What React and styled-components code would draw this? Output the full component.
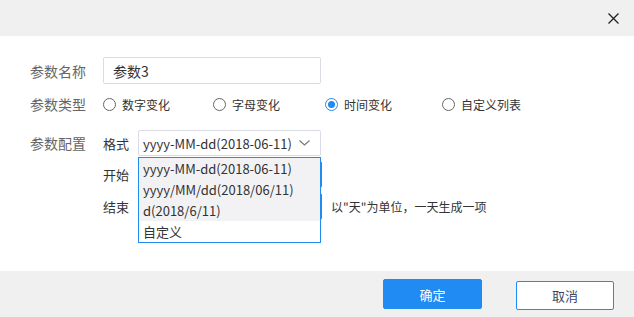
import React from 'react';
import styled, { createGlobalStyle } from 'styled-components';

const GlobalStyle = createGlobalStyle`
  html, body {
    margin: 0;
    padding: 0;
    background: #fff;
  }
  body {
    font-family: "Noto Sans CJK SC", "Noto Sans", sans-serif;
    font-size: 13px;
    color: #333;
  }
`;

const Dialog = styled.div`
  width: 634px;
  height: 317px;
  display: flex;
  flex-direction: column;
  background: #fff;
  overflow: hidden;
`;

const Header = styled.div`
  height: 36px;
  flex-shrink: 0;
  background: #f0f0f0;
  display: flex;
  align-items: center;
  justify-content: flex-end;
  padding-right: 15px;
`;

const CloseButton = styled.button`
  width: 12px;
  height: 12px;
  padding: 0;
  border: 0;
  background: none;
  display: flex;
  align-items: center;
  justify-content: center;
  cursor: pointer;
`;

const Body = styled.div`
  flex: 1;
  padding: 21px 0 0 30px;
  display: flex;
  flex-direction: column;
`;

const Row = styled.div`
  display: flex;
  align-items: ${p => (p.$top ? 'flex-start' : 'center')};
  height: ${p => (p.$h ? `${p.$h}px` : 'auto')};
  margin-top: ${p => p.$mt || 0}px;
`;

const Label = styled.div`
  width: 73px;
  flex-shrink: 0;
  color: #666;
  font-size: 14px;
  line-height: 26px;
`;

const TextInput = styled.div`
  box-sizing: border-box;
  width: ${p => p.$w || 218}px;
  height: ${p => p.$h || 27}px;
  border: 1px solid ${p => p.$border || '#d9dce6'};
  border-radius: 2px;
  padding: 0 9px;
  display: flex;
  align-items: center;
  color: #333;
  font-size: 14px;
  background: #fff;
`;

const RadioGroup = styled.div`
  display: flex;
  align-items: center;
`;

const RadioItem = styled.label`
  display: flex;
  align-items: center;
  width: ${p => p.$w}px;
  color: #333;
  font-size: 12px;
  white-space: nowrap;
`;

const RadioCircle = styled.span`
  box-sizing: border-box;
  width: 13px;
  height: 13px;
  border-radius: 50%;
  border: 1px solid ${p => (p.$checked ? '#1f8bf3' : '#666')};
  margin-right: 6px;
  display: flex;
  align-items: center;
  justify-content: center;
  &::after {
    content: '';
    width: 7px;
    height: 7px;
    border-radius: 50%;
    background: ${p => (p.$checked ? '#1f8bf3' : 'transparent')};
  }
`;

const ConfigArea = styled.div`
  display: flex;
  flex-direction: column;
`;

const SubRow = styled.div`
  display: flex;
  align-items: center;
  margin-top: ${p => p.$mt || 0}px;
`;

const SubLabel = styled.div`
  width: 35px;
  flex-shrink: 0;
  color: #333;
`;

const SelectWrap = styled.div`
  position: relative;
`;

const SelectBox = styled.div`
  box-sizing: border-box;
  width: 183px;
  height: 26px;
  border: 1px solid #d9dce6;
  border-radius: 2px;
  padding: 0 10px 0 4px;
  display: flex;
  align-items: center;
  justify-content: space-between;
  color: #333;
  background: #fff;
`;

const Dropdown = styled.div`
  position: absolute;
  left: 0;
  top: 27px;
  z-index: 5;
  box-sizing: border-box;
  width: 183px;
  border: 1px solid #1f8bf3;
  background: #fff;
`;

const Option = styled.div`
  height: 21px;
  line-height: 21px;
  padding: 0 4px;
  color: #333;
  background: ${p => (p.$hl ? '#f2f2f5' : '#fff')};
  white-space: nowrap;
`;

const Hint = styled.div`
  margin-left: 9px;
  color: #333;
  font-size: 12px;
`;

const Footer = styled.div`
  height: 46px;
  flex-shrink: 0;
  background: #f0f0f0;
  display: flex;
  align-items: center;
  justify-content: flex-end;
  padding-right: 20px;
  gap: 34px;
`;

const Button = styled.button`
  box-sizing: border-box;
  width: ${p => (p.$primary ? 99 : 98)}px;
  height: ${p => (p.$primary ? 30 : 29)}px;
  margin-top: ${p => (p.$primary ? 0 : 2)}px;
  border-radius: 2px;
  border: 1px solid #1f8bf3;
  background: ${p => (p.$primary ? '#1f8bf3' : '#fff')};
  color: ${p => (p.$primary ? '#fff' : '#3a4a66')};
  font-family: "Noto Sans CJK SC", "Noto Sans", sans-serif;
  font-size: 13px;
  cursor: pointer;
`;

const types = [
  { text: '数字变化', w: 110 },
  { text: '字母变化', w: 112 },
  { text: '时间变化', w: 117, checked: true },
  { text: '自定义列表', w: 90 },
];

const formats = [
  { text: 'yyyy-MM-dd(2018-06-11)', hl: true },
  { text: 'yyyy/MM/dd(2018/06/11)', hl: true },
  { text: 'd(2018/6/11)', hl: true },
  { text: '自定义' },
];

const Chevron = () => (
  <svg width="11" height="6" viewBox="0 0 11 6">
    <path d="M0.5 0.5 L5.5 5 L10.5 0.5" fill="none" stroke="#777" strokeWidth="1.1" />
  </svg>
);

const App = () => (
  <>
    <GlobalStyle />
    <Dialog>
      <Header>
        <CloseButton aria-label="close">
          <svg width="11" height="11" viewBox="0 0 11 11">
            <path d="M0.5 0.5 L10.5 10.5 M10.5 0.5 L0.5 10.5" stroke="#222" strokeWidth="1.3" />
          </svg>
        </CloseButton>
      </Header>
      <Body>
        <Row $h={27}>
          <Label>参数名称</Label>
          <TextInput>参数3</TextInput>
        </Row>
        <Row $h={20} $mt={10}>
          <Label>参数类型</Label>
          <RadioGroup>
            {types.map(t => (
              <RadioItem key={t.text} $w={t.w}>
                <RadioCircle $checked={t.checked} />
                {t.text}
              </RadioItem>
            ))}
          </RadioGroup>
        </Row>
        <Row $top $mt={16}>
          <Label>参数配置</Label>
          <ConfigArea>
            <SubRow>
              <SubLabel>格式</SubLabel>
              <SelectWrap>
                <SelectBox>
                  <span>yyyy-MM-dd(2018-06-11)</span>
                  <Chevron />
                </SelectBox>
                <Dropdown>
                  {formats.map(f => (
                    <Option key={f.text} $hl={f.hl}>{f.text}</Option>
                  ))}
                </Dropdown>
              </SelectWrap>
            </SubRow>
            <SubRow $mt={5}>
              <SubLabel>开始</SubLabel>
              <TextInput $w={184} $h={27} $border="#5a79ab" />
            </SubRow>
            <SubRow $mt={5}>
              <SubLabel>结束</SubLabel>
              <TextInput $w={184} $h={27} $border="#5a79ab" />
              <Hint>以"天"为单位，一天生成一项</Hint>
            </SubRow>
          </ConfigArea>
        </Row>
      </Body>
      <Footer>
        <Button $primary>确定</Button>
        <Button>取消</Button>
      </Footer>
    </Dialog>
  </>
);

export default App;
